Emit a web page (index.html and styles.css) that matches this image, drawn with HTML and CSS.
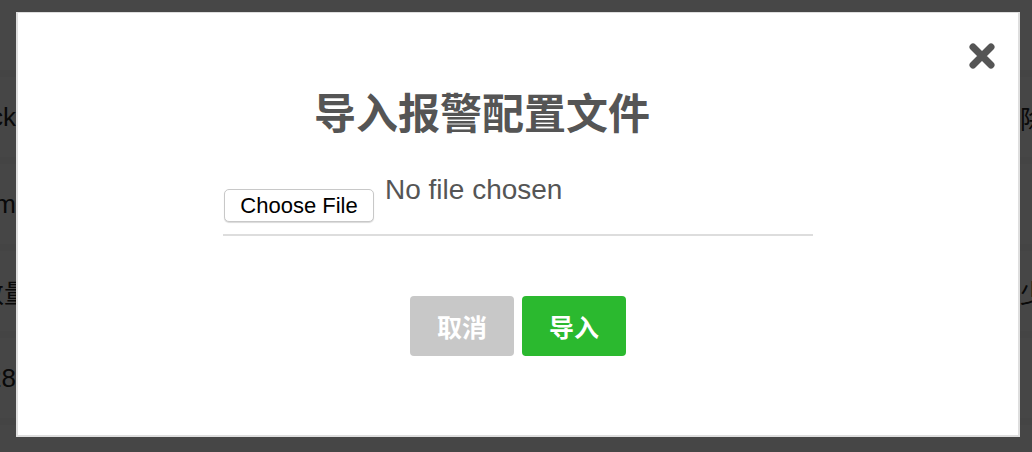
FILE: index.html
```html
<!DOCTYPE html>
<html lang="zh">
<head>
<meta charset="utf-8">
<title>导入报警配置文件</title>
<link rel="stylesheet" href="styles.css">
</head>
<body>
<div class="page">
  <div class="row"><div class="cell-left">Stack</div><div class="cell-mid"></div><div class="cell-right">删除</div></div>
  <div class="row"><div class="cell-left">Item</div><div class="cell-mid"></div><div class="cell-right"></div></div>
  <div class="row"><div class="cell-left cell-left-wide">告警数量</div><div class="cell-mid"></div><div class="cell-right">减少</div></div>
  <div class="row"><div class="cell-left">128</div><div class="cell-mid"></div><div class="cell-right"></div></div>
  <div class="row"><div class="cell-left"></div><div class="cell-mid bottom-text">告警配置文件说明</div><div class="cell-right"></div></div>
</div>
<div class="overlay"></div>
<div class="modal">
  <button class="close" aria-label="关闭">
    <svg width="28" height="28" viewBox="0 0 28 28"><path d="M5 5 L23 23 M23 5 L5 23" stroke="#555" stroke-width="7" stroke-linecap="round" fill="none"/></svg>
  </button>
  <h1 class="title">导入报警配置文件</h1>
  <div class="file-row">
    <span class="file-btn">Choose File</span>
    <span class="file-name">No file chosen</span>
  </div>
  <div class="actions">
    <button class="btn btn-cancel">取消</button>
    <button class="btn btn-import">导入</button>
  </div>
</div>
</body>
</html>
```
FILE: styles.css
```css
html, body {
  margin: 0;
  padding: 0;
  height: 100%;
  overflow: hidden;
}
body {
  font-family: "Liberation Sans", "Noto Sans CJK SC", sans-serif;
  background: #ffffff;
}
.page {
  display: flex;
  flex-direction: column;
  padding-top: 70px;
}
.row {
  display: flex;
  flex-shrink: 0;
  height: 80px;
  align-items: center;
  border-top: 7px solid #f2f2f2;
  background: #fafafa;
  font-size: 26px;
  color: #222;
}
.cell-left {
  width: 16px;
  display: flex;
  justify-content: flex-end;
  white-space: nowrap;
}
.cell-left-wide {
  width: 30px;
  margin-right: -14px;
}
.cell-mid {
  flex: 1;
}
.cell-right {
  position: absolute;
  left: 994px;
  white-space: nowrap;
}
.bottom-text {
  padding-left: 285px;
}
.overlay {
  position: fixed;
  inset: 0;
  background: rgba(0, 0, 0, 0.72);
}
.modal {
  position: fixed;
  left: 16px;
  top: 12px;
  width: 1000px;
  height: 422px;
  background: #fff;
  border: 2px solid #dedede;
  border-top-width: 1px;
  display: flex;
  flex-direction: column;
  align-items: center;
}
.close {
  position: absolute;
  right: 22px;
  top: 29px;
  background: none;
  border: 0;
  padding: 0;
  width: 28px;
  height: 28px;
  cursor: pointer;
}
.close svg { display: block; }
.title {
  margin: 72px 0 0;
  padding-right: 72px;
  font-family: "Noto Sans CJK SC", sans-serif;
  font-size: 42px;
  line-height: 52px;
  font-weight: 700;
  color: #555;
}
.file-row {
  margin-top: 40px;
  width: 590px;
  display: flex;
  align-items: flex-start;
  border-bottom: 2px solid #dddddd;
  padding-bottom: 12px;
  box-sizing: border-box;
  padding-left: 1px;
}
.file-btn {
  margin-top: 12px;
  width: 150px;
  height: 33px;
  box-sizing: border-box;
  border: 1px solid #c8c8c8;
  border-radius: 5px;
  background: #fff;
  box-shadow: 0 1px 1px rgba(0,0,0,0.15);
  font-family: "Liberation Sans", sans-serif;
  font-size: 22px;
  line-height: 31px;
  text-align: center;
  color: #000;
}
.file-name {
  margin-left: 11px;
  font-family: "Liberation Sans", sans-serif;
  font-size: 28px;
  line-height: 26px;
  color: #555;
}
.actions {
  margin-top: 60px;
  display: flex;
  gap: 8px;
}
.btn {
  width: 104px;
  height: 60px;
  border: 0;
  border-radius: 4px;
  color: #fff;
  font-family: "Noto Sans CJK SC", sans-serif;
  font-size: 25px;
  font-weight: 700;
  padding: 0;
}
.btn-cancel { background: #c8c8c8; }
.btn-import { background: #2bb92f; }
```
